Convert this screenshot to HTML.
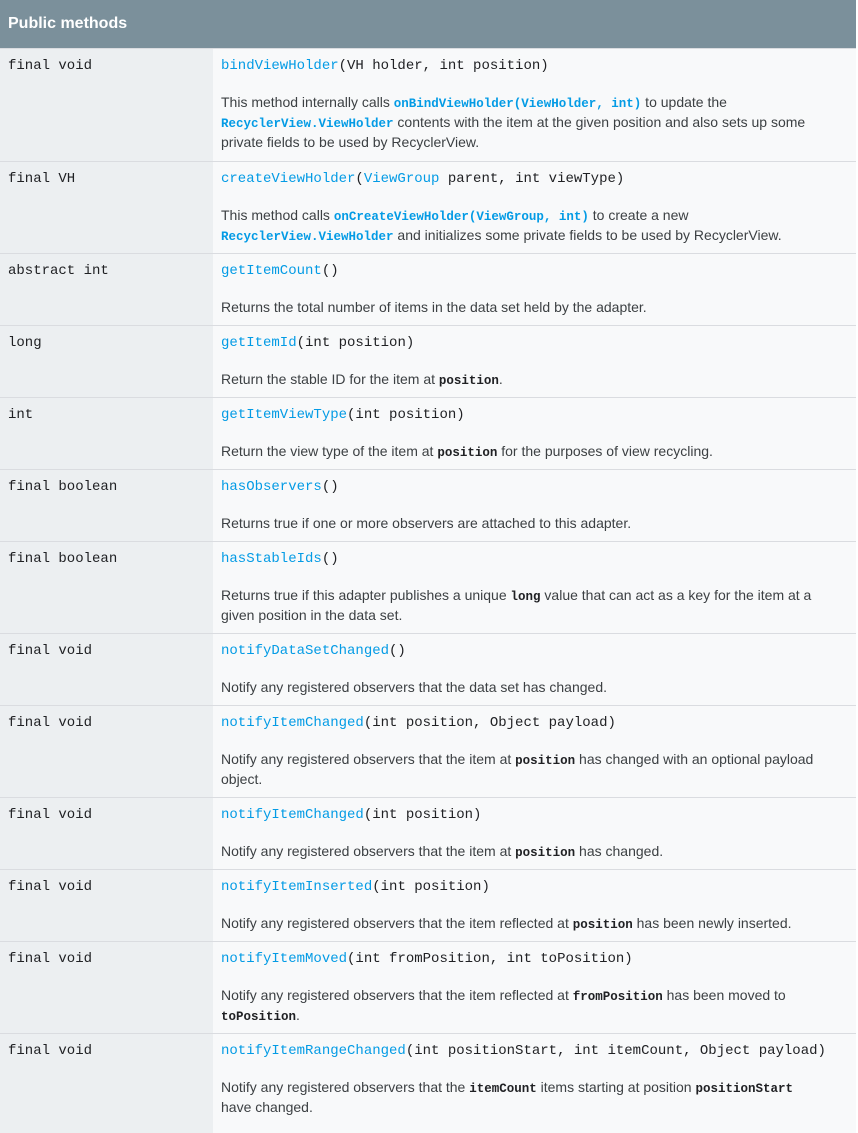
<!DOCTYPE html>
<html><head><meta charset="utf-8"><style>
body{margin:0;background:#fff;width:858px;height:1119px;overflow:hidden}
.t{width:856px}
.h{height:48px;background:#7b909b;color:#fff;font:bold 16px "Liberation Sans",sans-serif;line-height:48px;padding-left:8px;box-sizing:border-box}
.r{display:flex;border-top:1px solid #dadce0;box-sizing:border-box}
.r:first-of-type{border-top:0}
.l{width:213px;background:#eceff1;padding:7px 8px 0;box-sizing:border-box;font:14px/20px "Liberation Mono",monospace;color:#202124}
.c{flex:1;background:#f8f9fa;padding:7px 8px 0;box-sizing:border-box}
.s{font:14px/20px "Liberation Mono",monospace;color:#202124;white-space:pre}
.d{margin-top:16px;font:14px/20px "Liberation Sans",sans-serif;color:#3c4043}
a{color:#039be5;text-decoration:none}
code{font:12.5px "Liberation Mono",monospace;color:#202124;font-weight:bold}
.d a{font:bold 12.5px "Liberation Mono",monospace;color:#039be5}
</style></head><body><div class="t">
<div class="h">Public methods</div>
<div class="r" style="height:113px"><div class="l">final void</div><div class="c"><div class="s"><a>bindViewHolder</a>(VH holder, int position)</div><div class="d">This method internally calls <a>onBindViewHolder(ViewHolder, int)</a> to update the <a>RecyclerView.ViewHolder</a> contents with the item at the given position and also sets up some private fields to be used by RecyclerView.</div></div></div>
<div class="r" style="height:92px"><div class="l">final VH</div><div class="c"><div class="s"><a>createViewHolder</a>(<a>ViewGroup</a> parent, int viewType)</div><div class="d">This method calls <a>onCreateViewHolder(ViewGroup, int)</a> to create a new <a>RecyclerView.ViewHolder</a> and initializes some private fields to be used by RecyclerView.</div></div></div>
<div class="r" style="height:72px"><div class="l">abstract int</div><div class="c"><div class="s"><a>getItemCount</a>()</div><div class="d">Returns the total number of items in the data set held by the adapter.</div></div></div>
<div class="r" style="height:72px"><div class="l">long</div><div class="c"><div class="s"><a>getItemId</a>(int position)</div><div class="d">Return the stable ID for the item at <code>position</code>.</div></div></div>
<div class="r" style="height:72px"><div class="l">int</div><div class="c"><div class="s"><a>getItemViewType</a>(int position)</div><div class="d">Return the view type of the item at <code>position</code> for the purposes of view recycling.</div></div></div>
<div class="r" style="height:72px"><div class="l">final boolean</div><div class="c"><div class="s"><a>hasObservers</a>()</div><div class="d">Returns true if one or more observers are attached to this adapter.</div></div></div>
<div class="r" style="height:92px"><div class="l">final boolean</div><div class="c"><div class="s"><a>hasStableIds</a>()</div><div class="d">Returns true if this adapter publishes a unique <code>long</code> value that can act as a key for the item at a given position in the data set.</div></div></div>
<div class="r" style="height:72px"><div class="l">final void</div><div class="c"><div class="s"><a>notifyDataSetChanged</a>()</div><div class="d">Notify any registered observers that the data set has changed.</div></div></div>
<div class="r" style="height:92px"><div class="l">final void</div><div class="c"><div class="s"><a>notifyItemChanged</a>(int position, Object payload)</div><div class="d">Notify any registered observers that the item at <code>position</code> has changed with an optional payload object.</div></div></div>
<div class="r" style="height:72px"><div class="l">final void</div><div class="c"><div class="s"><a>notifyItemChanged</a>(int position)</div><div class="d">Notify any registered observers that the item at <code>position</code> has changed.</div></div></div>
<div class="r" style="height:72px"><div class="l">final void</div><div class="c"><div class="s"><a>notifyItemInserted</a>(int position)</div><div class="d">Notify any registered observers that the item reflected at <code>position</code> has been newly inserted.</div></div></div>
<div class="r" style="height:92px"><div class="l">final void</div><div class="c"><div class="s"><a>notifyItemMoved</a>(int fromPosition, int toPosition)</div><div class="d">Notify any registered observers that the item reflected at <code>fromPosition</code> has been moved to <code>toPosition</code>.</div></div></div>
<div class="r" style="height:100px"><div class="l">final void</div><div class="c"><div class="s"><a>notifyItemRangeChanged</a>(int positionStart, int itemCount, Object payload)</div><div class="d" style="padding-right:30px">Notify any registered observers that the <code>itemCount</code> items starting at position <code>positionStart</code> have changed.</div></div></div>
</div></body></html>
